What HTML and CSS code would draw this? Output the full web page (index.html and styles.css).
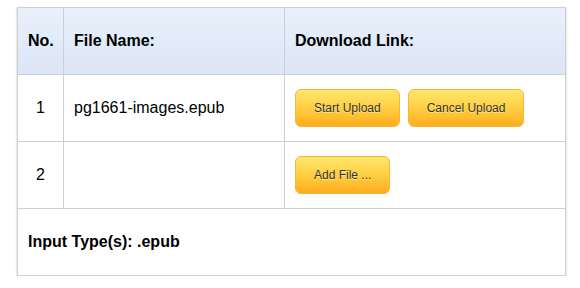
FILE: index.html
```html
<!DOCTYPE html>
<html>
<head>
<meta charset="utf-8">
<link rel="stylesheet" href="styles.css">
</head>
<body>
<div class="wrap">
  <table class="files">
    <thead>
      <tr>
        <th class="c-no">No.</th>
        <th class="c-name">File Name:</th>
        <th class="c-link">Download Link:</th>
      </tr>
    </thead>
    <tbody>
      <tr>
        <td class="c-no num">1</td>
        <td class="c-name">pg1661-images.epub</td>
        <td class="c-link">
          <div class="btns">
            <button class="btn">Start Upload</button>
            <button class="btn">Cancel Upload</button>
          </div>
        </td>
      </tr>
      <tr>
        <td class="c-no num">2</td>
        <td class="c-name"></td>
        <td class="c-link">
          <div class="btns">
            <button class="btn">Add File ...</button>
          </div>
        </td>
      </tr>
      <tr>
        <td class="foot" colspan="3">Input Type(s): .epub</td>
      </tr>
    </tbody>
  </table>
</div>
</body>
</html>
```
FILE: styles.css
```css
html, body {
  margin: 0;
  padding: 0;
  background: #fff;
}
body {
  font-family: "Liberation Sans", Arial, Helvetica, sans-serif;
  color: #000;
}
.wrap {
  padding: 7px 0 0 17px;
}
.files {
  border-collapse: separate;
  border-spacing: 0;
  border: 1px solid #cfcfcf;
  width: 549px;
  table-layout: fixed;
  box-shadow: 0 1px 2px rgba(0, 0, 0, 0.25);
}
.files th,
.files td {
  box-sizing: border-box;
  padding: 0 0 0 10px;
  vertical-align: middle;
  text-align: left;
  font-size: 16px;
  height: 67px;
  border-top: 1px solid #cfcfcf;
}
.files thead th {
  height: 66px;
  border-top: 0;
  font-weight: bold;
  background: linear-gradient(#e9f0fb, #dbe6f6);
}
.files .c-no {
  width: 45px;
}
.files .c-name {
  width: 221px;
  border-left: 1px solid #cfcfcf;
}
.files .c-link {
  width: 281px;
  border-left: 1px solid #cfcfcf;
}
.files .num {
  text-align: center;
  padding: 0;
}
.files .foot {
  font-weight: bold;
}
.btns {
  display: flex;
  gap: 8px;
  align-items: center;
}
.btn {
  box-sizing: border-box;
  height: 38px;
  padding: 0 18px;
  border: 1px solid #f4b73a;
  border-radius: 6px;
  background: linear-gradient(#ffe76c, #ffcc40 55%, #ffac1c);
  font-family: "Liberation Sans", Arial, Helvetica, sans-serif;
  font-size: 12px;
  color: #333;
  text-shadow: 0 1px 0 rgba(255, 245, 170, 0.7);
  cursor: pointer;
  white-space: nowrap;
}
```
